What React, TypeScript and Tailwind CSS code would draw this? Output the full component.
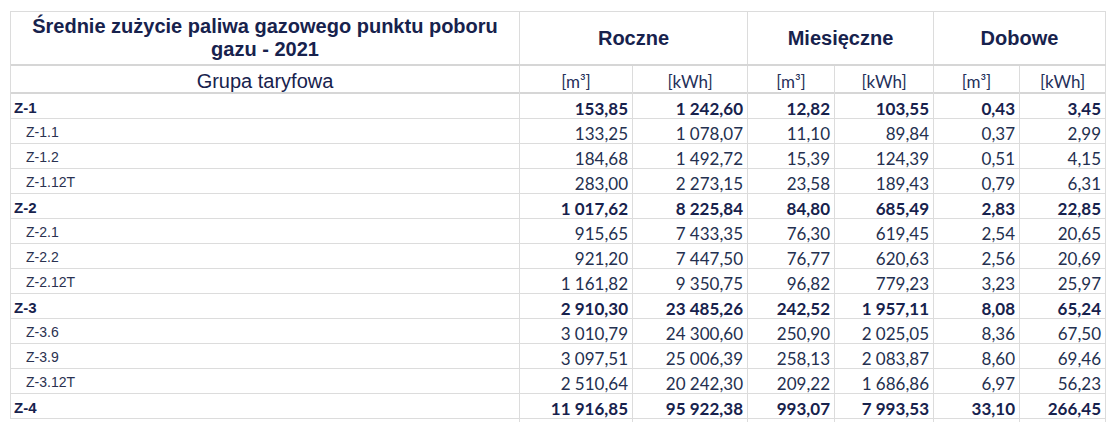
import React from "react";

type Row = { label: string; main: boolean; v: string[] };

const rows: Row[] = [
  { label: "Z-1", main: true, v: ["153,85", "1 242,60", "12,82", "103,55", "0,43", "3,45"] },
  { label: "Z-1.1", main: false, v: ["133,25", "1 078,07", "11,10", "89,84", "0,37", "2,99"] },
  { label: "Z-1.2", main: false, v: ["184,68", "1 492,72", "15,39", "124,39", "0,51", "4,15"] },
  { label: "Z-1.12T", main: false, v: ["283,00", "2 273,15", "23,58", "189,43", "0,79", "6,31"] },
  { label: "Z-2", main: true, v: ["1 017,62", "8 225,84", "84,80", "685,49", "2,83", "22,85"] },
  { label: "Z-2.1", main: false, v: ["915,65", "7 433,35", "76,30", "619,45", "2,54", "20,65"] },
  { label: "Z-2.2", main: false, v: ["921,20", "7 447,50", "76,77", "620,63", "2,56", "20,69"] },
  { label: "Z-2.12T", main: false, v: ["1 161,82", "9 350,75", "96,82", "779,23", "3,23", "25,97"] },
  { label: "Z-3", main: true, v: ["2 910,30", "23 485,26", "242,52", "1 957,11", "8,08", "65,24"] },
  { label: "Z-3.6", main: false, v: ["3 010,79", "24 300,60", "250,90", "2 025,05", "8,36", "67,50"] },
  { label: "Z-3.9", main: false, v: ["3 097,51", "25 006,39", "258,13", "2 083,87", "8,60", "69,46"] },
  { label: "Z-3.12T", main: false, v: ["2 510,64", "20 242,30", "209,22", "1 686,86", "6,97", "56,23"] },
  { label: "Z-4", main: true, v: ["11 916,85", "95 922,38", "993,07", "7 993,53", "33,10", "266,45"] },
];

const grid = "grid grid-cols-[509px_113px_115px_87px_99px_86px_86px]";
const arial = "font-['Liberation_Sans',Arial,sans-serif]";
const num = "font-['Lato','Liberation_Sans',sans-serif]";

export default function App() {
  return (
    <div className="w-[1112px] h-[429px] bg-white pl-[10px] pt-[11px] text-[#17224d]">
      <div className="w-[1096px] border-l border-t border-[#dcdcdc]">
        <div className={`${grid} h-[54px] border-b-2 border-[#d6d6d6]`}>
          <div className={`${arial} border-r border-[#dcdcdc] flex items-center justify-center text-center font-bold text-[20px] leading-[23px] px-[14px]`}>
            Średnie zużycie paliwa gazowego punktu poboru gazu - 2021
          </div>
          <div className={`${arial} col-span-2 border-r border-[#dcdcdc] flex items-center justify-center font-bold text-[20px]`}>Roczne</div>
          <div className={`${arial} col-span-2 border-r border-[#dcdcdc] flex items-center justify-center font-bold text-[20px]`}>Miesięczne</div>
          <div className={`${arial} col-span-2 border-r border-[#dcdcdc] flex items-center justify-center font-bold text-[20px]`}>Dobowe</div>
        </div>
        <div className={`${grid} h-[28px] border-b-2 border-[#d6d6d6]`}>
          <div className={`${arial} border-r border-[#dcdcdc] flex items-center justify-center text-[20px]`}>Grupa taryfowa</div>
          {["[m³]", "[kWh]", "[m³]", "[kWh]", "[m³]", "[kWh]"].map((u, i) => (
            <div key={i} className={`${num} border-r border-[#dcdcdc] flex items-center justify-center pt-[1px] text-[17px] text-[#25305a]`}>{u}</div>
          ))}
        </div>
        {rows.map((r) => (
          <div key={r.label} className={`${grid} h-[25px] border-b border-[#dcdcdc]`}>
            <div
              className={`${arial} border-r border-[#dcdcdc] flex items-center ${
                r.main ? "pl-[3px] font-bold text-[15px]" : "pl-[15px] text-[14px] text-[#2a3150]"
              }`}
            >
              {r.label}
            </div>
            {r.v.map((x, i) => (
              <div
                key={i}
                className={`${num} border-r border-[#dcdcdc] flex items-center justify-end pr-[4px] pt-[2px] text-[17px] ${
                  r.main ? "font-bold" : "text-[#24304f]"
                }`}
              >
                {x}
              </div>
            ))}
          </div>
        ))}
      </div>
    </div>
  );
}
